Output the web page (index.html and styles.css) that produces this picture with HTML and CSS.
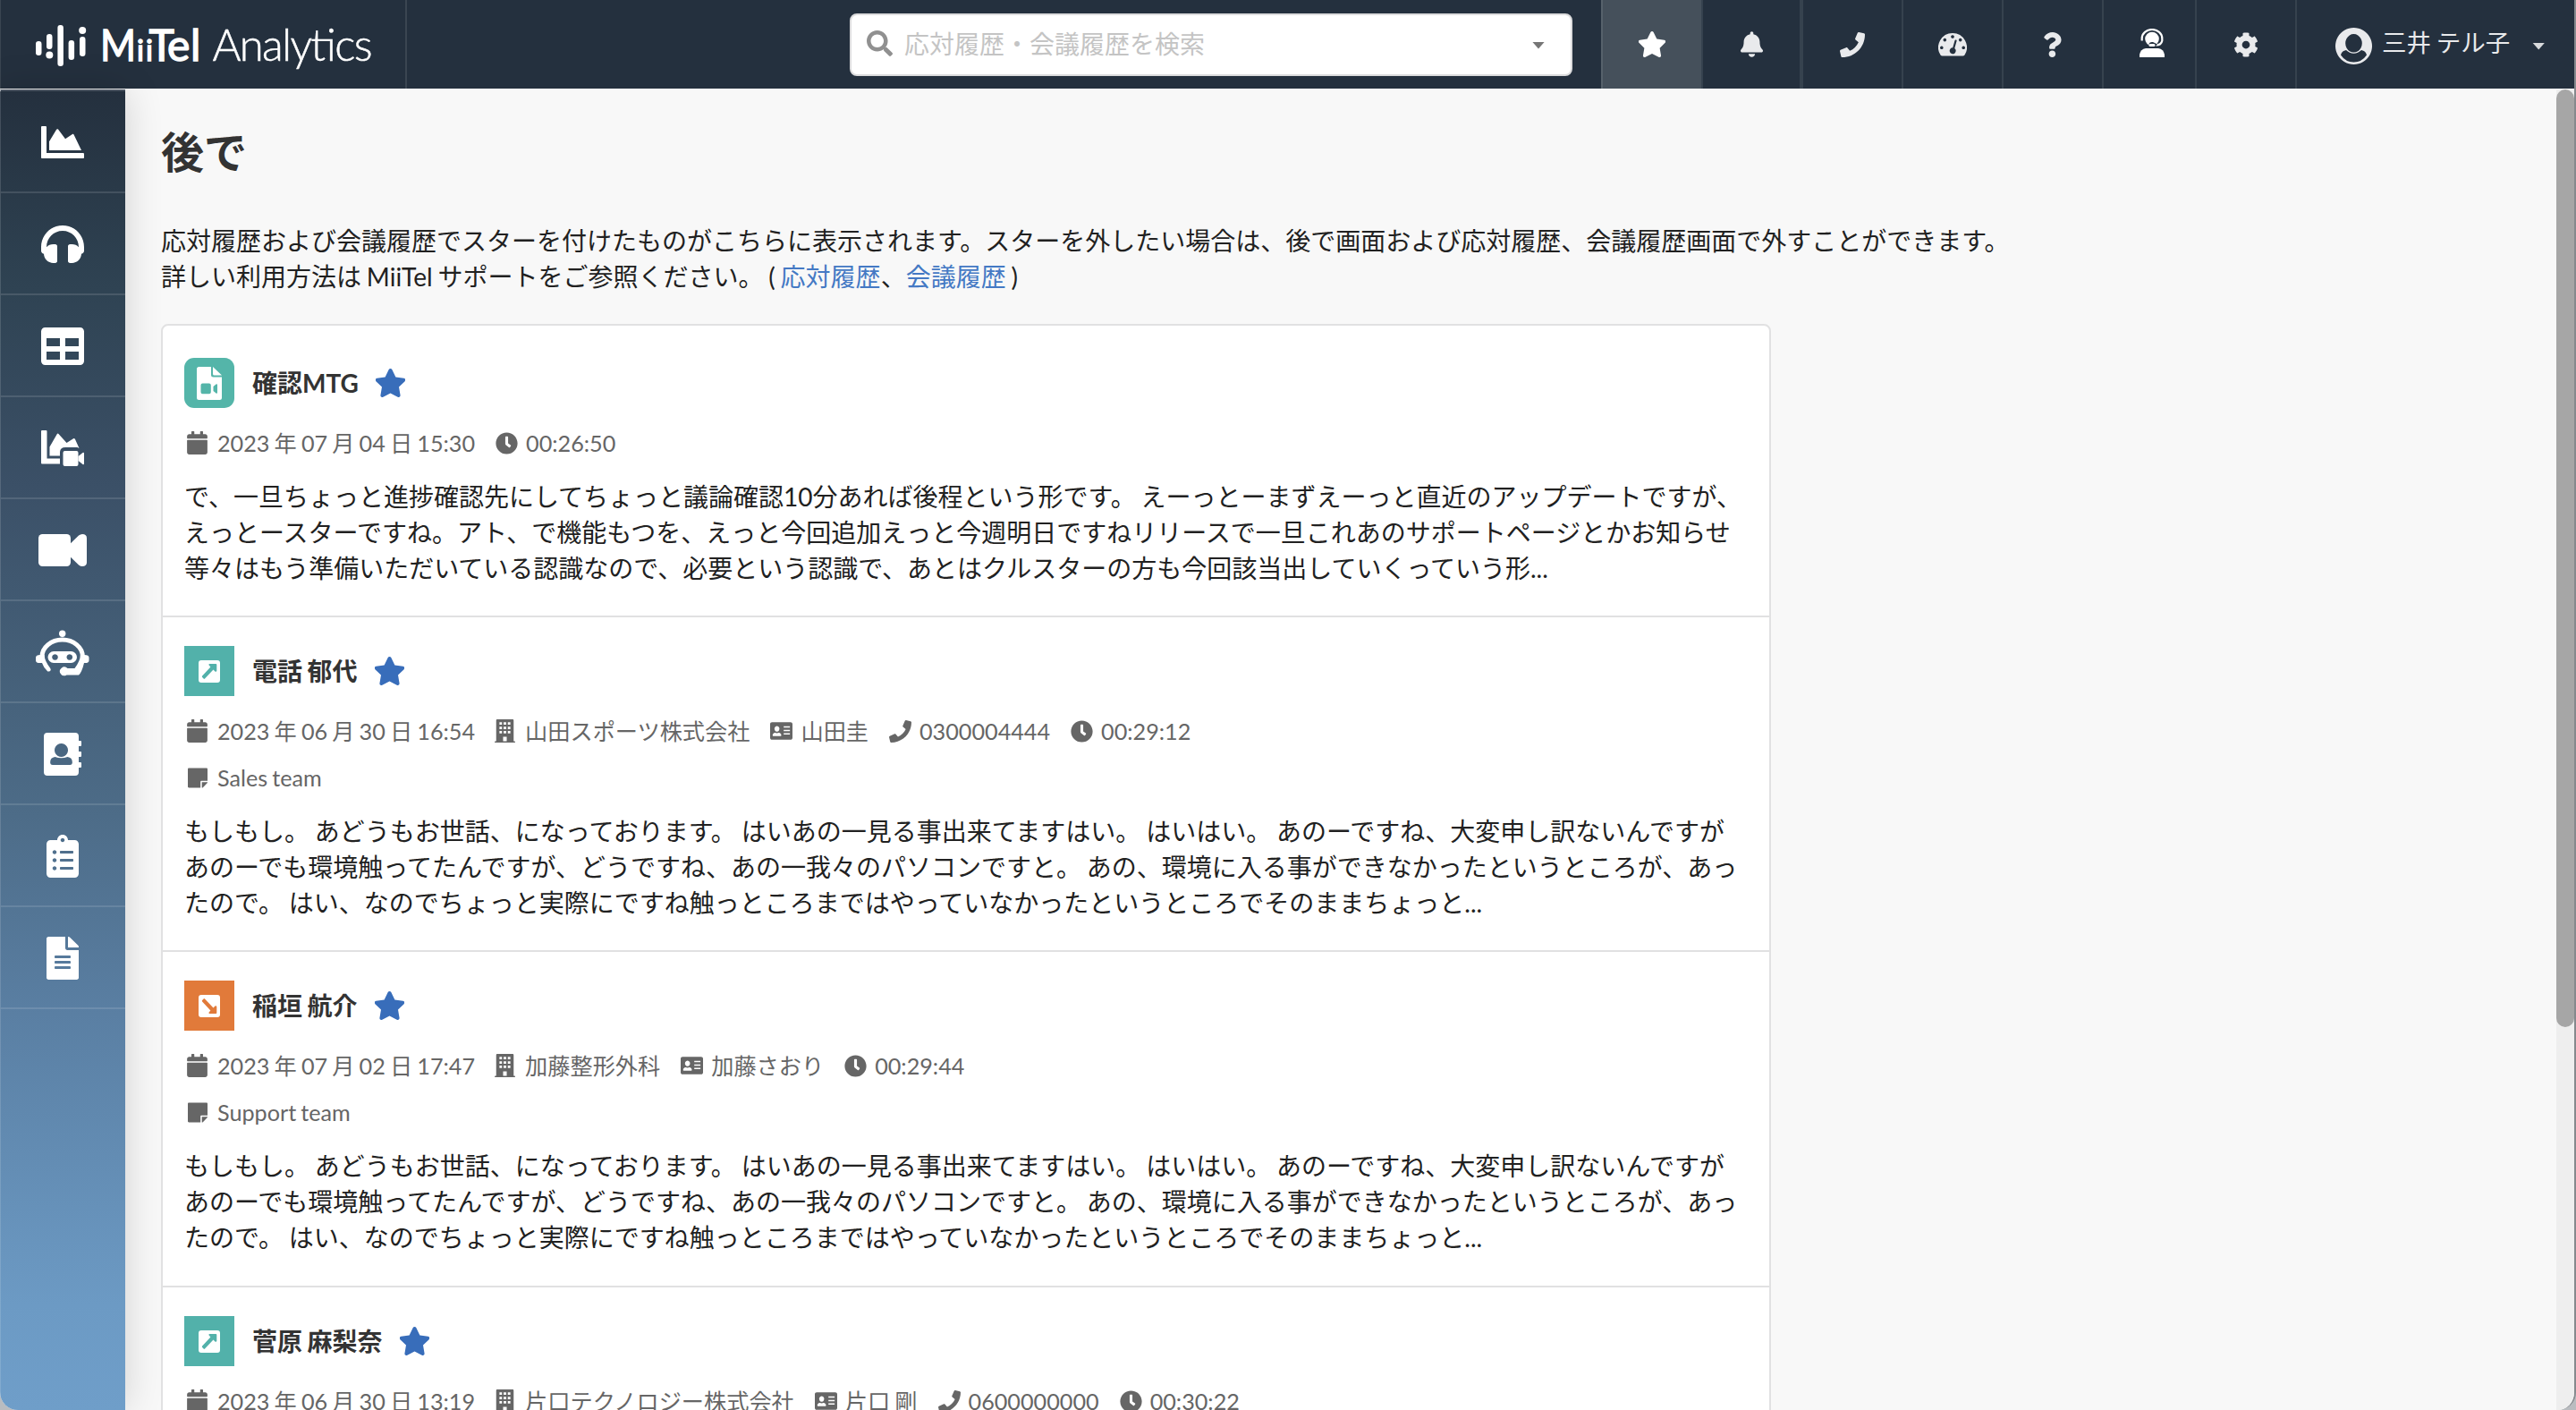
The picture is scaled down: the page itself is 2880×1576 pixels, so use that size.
FILE: index.html
```html
<!DOCTYPE html>
<html lang="ja">
<head>
<meta charset="utf-8">
<title>MiiTel Analytics</title>
<link rel="stylesheet" href="styles.css">
</head>
<body>
<svg class="defs" width="0" height="0">
  <symbol id="i-star" viewBox="24 0 528 512"><path d="M259.3 17.8L194 150.2 47.9 171.5c-26.2 3.8-36.7 36.1-17.7 54.6l105.7 103-25 145.5c-4.5 26.3 23.2 46 46.4 33.7L288 439.6l130.7 68.7c23.2 12.2 50.9-7.4 46.4-33.7l-25-145.5 105.7-103c19-18.5 8.5-50.8-17.7-54.6L382 150.2 316.7 17.8c-11.7-23.6-45.6-23.9-57.4 0z"/></symbol>
  <symbol id="i-phone" viewBox="0 0 512 512"><path d="M493.4 24.6l-104-24c-11.3-2.6-22.9 3.3-27.5 13.9l-48 112c-4.2 9.8-1.4 21.3 6.9 28l60.6 49.6c-36 76.7-98.9 140.5-177.2 177.2l-49.6-60.6c-6.8-8.3-18.2-11.1-28-6.9l-112 48C3.9 366.5-2 378.1.6 389.4l24 104C27.1 504.2 36.7 512 48 512c256.1 0 464-207.5 464-464 0-11.2-7.7-20.9-18.6-23.4z"/></symbol>
  <symbol id="i-calendar" viewBox="0 0 448 512"><path d="M12 192h424c6.6 0 12 5.4 12 12v260c0 26.5-21.5 48-48 48H48c-26.5 0-48-21.5-48-48V204c0-6.6 5.4-12 12-12zm436-44v-36c0-26.5-21.5-48-48-48h-48V12c0-6.6-5.4-12-12-12h-40c-6.6 0-12 5.4-12 12v52H160V12c0-6.6-5.4-12-12-12h-40c-6.6 0-12 5.4-12 12v52H48C21.5 64 0 85.5 0 112v36c0 6.6 5.4 12 12 12h424c6.6 0 12-5.4 12-12z"/></symbol>
  <symbol id="i-clock" viewBox="0 0 512 512"><path d="M256,8C119,8,8,119,8,256S119,504,256,504,504,393,504,256,393,8,256,8Zm92.49,313h0l-20,25a16,16,0,0,1-22.49,2.5h0l-67-49.72a40,40,0,0,1-15-31.23V112a16,16,0,0,1,16-16h32a16,16,0,0,1,16,16V256l58,42.5A16,16,0,0,1,348.49,321Z"/></symbol>
  <symbol id="i-building" viewBox="0 0 448 512"><path fill-rule="evenodd" d="M436 480h-20V24c0-13-11-24-24-24H56C43 0 32 11 32 24v456H12c-7 0-12 5-12 12v20h448v-20c0-7-5-12-12-12zM104 64h56v56h-56zM196 64h56v56h-56zM288 64h56v56h-56zM104 160h56v56h-56zM196 160h56v56h-56zM288 160h56v56h-56zM104 256h56v56h-56zM196 256h56v56h-56zM288 256h56v56h-56zM184 384h80v96h-80z"/></symbol>
  <symbol id="i-card" viewBox="0 0 576 448"><path fill-rule="evenodd" d="M48 0h480c26 0 48 22 48 48v352c0 26-22 48-48 48H48c-26 0-48-22-48-48V48C0 22 22 0 48 0zM176 96a64 74 0 1 0 .1 0zM64 340c0 8 6 14 14 14h196c8 0 14-6 14-14 0-44-24-68-64-72q-48 22-96 0c-40 4-64 28-64 72zM350 104h160v34H350zM350 194h160v34H350zM350 284h160v34H350z"/></symbol>
  <symbol id="i-note" viewBox="0 32 448 448"><path d="M312 320h136V56c0-13.300-10.700-24-24-24H24C10.700 32 0 42.700 0 56v400c0 13.300 10.700 24 24 24h264V344c0-13.200 10.800-24 24-24zm129 55l-98 98c-4.500 4.500-10.600 7-17 7h-6V352h128v6.100c0 6.300-2.500 12.400-7 16.900z"/></symbol>
  <symbol id="i-out" viewBox="0 0 24 25"><path fill-rule="evenodd" d="M3 0h18q3 0 3 3v19q0 3-3 3H3q-3 0-3-3V3q0-3 3-3zM12.300 4q-1.500.3-.7 1.600l1.800 1.900-9.300 10q-.6.8 0 1.500l1.500 1.600q.7.600 1.400 0l9.500-10 1.900 1.900q1.600 1 1.900-.7V5q0-1-1-1z"/></symbol>
  <symbol id="i-in" viewBox="0 0 24 25"><path transform="matrix(1 0 0 -1 0 25)" fill-rule="evenodd" d="M3 0h18q3 0 3 3v19q0 3-3 3H3q-3 0-3-3V3q0-3 3-3zM12.300 4q-1.500.3-.7 1.600l1.800 1.900-9.300 10q-.6.8 0 1.500l1.500 1.600q.7.600 1.400 0l9.500-10 1.900 1.900q1.600 1 1.900-.7V5q0-1-1-1z"/></symbol>
</svg>
<div class="app">
  <header class="topbar">
    <div class="brand">
      <svg class="logo" width="400" height="99" viewBox="0 -24 400 99">
        <rect x="0" y="22" width="6.500" height="16" rx="3.200"/><rect x="12" y="14" width="6.500" height="17" rx="3.200"/><circle cx="15.300" cy="37.500" r="4"/>
        <rect x="24.400" y="4" width="6.500" height="46" rx="3"/><rect x="36.600" y="21" width="6.500" height="22" rx="3.200"/><rect x="49" y="17" width="6.500" height="22" rx="3.200"/><circle cx="52.200" cy="10" r="4"/>
        <text class="logo-main" y="44"><tspan x="72" textLength="40" lengthAdjust="spacingAndGlyphs">M</tspan><tspan class="logo-small" x="113">i</tspan><tspan class="logo-small" x="123">i</tspan><tspan x="126.500">T</tspan><tspan x="147">e</tspan><tspan x="173">l</tspan></text>
        <text class="logo-sub" x="197.500" y="44" textLength="179">Analytics</text>
      </svg>
    </div>
    <div class="search-area">
      <div class="search">
        <svg class="search-icon" viewBox="0 0 512 512"><path d="M505 442.700L405.300 343c-4.500-4.500-10.600-7-17-7H372c27.600-35.300 44-79.700 44-128C416 93.100 322.900 0 208 0S0 93.100 0 208s93.100 208 208 208c48.300 0 92.700-16.400 128-44v16.300c0 6.400 2.500 12.500 7 17l99.700 99.700c9.400 9.400 24.600 9.400 33.900 0l28.300-28.300c9.400-9.400 9.400-24.600.1-34zM208 336c-70.700 0-128-57.200-128-128 0-70.700 57.200-128 128-128 70.700 0 128 57.200 128 128 0 70.700-57.200 128-128 128z"/></svg>
        <span class="placeholder">応対履歴・会議履歴を検索</span>
        <span class="caret caret-dark"></span>
      </div>
    </div>
    <nav class="tools">
      <a class="tool active"><svg width="30" height="29"><use href="#i-star"/></svg></a>
      <a class="tool w110"><svg width="25" height="29" viewBox="0 0 448 512"><path d="M224 512c35.320 0 63.970-28.650 63.970-64H160.030c0 35.350 28.650 64 63.970 64zm215.390-149.710c-19.320-20.760-55.470-51.990-55.470-154.290 0-77.700-54.480-139.900-127.940-155.160V32c0-17.670-14.320-32-31.980-32s-31.980 14.330-31.980 32v20.840C118.560 68.100 64.080 130.300 64.080 208c0 102.300-36.150 133.530-55.470 154.290-6 6.450-8.660 14.160-8.610 21.710.11 16.400 12.980 32 32.100 32h383.800c19.120 0 32-15.600 32.100-32 .05-7.550-2.610-15.270-8.610-21.710z"/></svg></a>
      <a class="tool w114"><svg width="28" height="28"><use href="#i-phone"/></svg></a>
      <a class="tool"><svg width="32" height="26" viewBox="0 0 32 26"><path fill-rule="evenodd" d="M16 0a16 16 0 0 1 13.500 24.500q-.8 1-2 1h-23q-1.200 0-2-1A16 16 0 0 1 16 0zM16 2.200a1.800 1.800 0 1 0 .01 0zM7.300 5.800a1.800 1.800 0 1 0 .01 0zM24.700 5.800a1.800 1.800 0 1 0 .01 0zM3.800 14.500a1.800 1.800 0 1 0 .01 0zM28.200 14.500a1.800 1.800 0 1 0 .01 0zM18.500 8.200l-2.300 8.100a3.500 3.500 0 1 0 2.100.7l2.300-8.200a1.100 1.100 0 0 0-2.100-.6z"/></svg></a>
      <a class="tool"><svg width="20" height="28" viewBox="20 0 366 512"><path d="M202.021 0C122.202 0 70.503 32.703 29.914 91.026c-7.363 10.580-5.093 25.086 5.178 32.874l43.138 32.709c10.373 7.865 25.132 6.026 33.253-4.148 25.049-31.381 43.630-49.449 82.757-49.449 30.764 0 68.816 19.799 68.816 49.631 0 22.552-18.617 34.134-48.993 51.164-35.423 19.860-82.299 44.576-82.299 106.405V320c0 13.255 10.745 24 24 24h72.471c13.255 0 24-10.745 24-24v-5.773c0-42.860 125.268-44.645 125.268-160.627C377.504 66.256 286.902 0 202.021 0zM192 373.459c-38.196 0-69.271 31.075-69.271 69.271 0 38.195 31.075 69.270 69.271 69.270s69.271-31.075 69.271-69.271-31.075-69.270-69.271-69.270z"/></svg></a>
      <a class="tool w104 agent"><svg width="28" height="32" viewBox="0 0 28 32"><path d="M0 32v-3q1-6 7-7h14q6 1 7 7v3z"/><circle cx="14" cy="11.500" r="7.800"/><path class="line" d="M2.700 13.500V11a11.300 10 0 0 1 22.600 0v2.500q-1 5-7 5"/><path class="cut" d="M10.500 17q1-2.500 4.500-2l5 2.500-3 3-6-1z"/><rect x="10.500" y="17" width="7" height="3" rx="1.500"/></svg></a>
      <a class="tool"><svg width="28" height="28" viewBox="0 0 512 512"><path d="M487.400 315.700l-42.600-24.600c4.300-23.200 4.300-47 0-70.200l42.600-24.600c4.900-2.800 7.100-8.600 5.500-14-11.100-35.600-30-67.800-54.700-94.600-3.800-4.100-10-5.100-14.800-2.300L380.800 110c-17.900-15.400-38.500-27.300-60.800-35.100V25.800c0-5.600-3.900-10.500-9.400-11.700-36.700-8.200-74.300-7.800-109.200 0-5.500 1.200-9.400 6.100-9.400 11.700V75c-22.200 7.900-42.800 19.800-60.800 35.100L88.700 85.500c-4.900-2.800-11-1.900-14.800 2.300-24.700 26.700-43.600 58.900-54.700 94.600-1.700 5.400.6 11.200 5.500 14L67.300 221c-4.300 23.200-4.300 47 0 70.200l-42.600 24.600c-4.900 2.800-7.100 8.600-5.500 14 11.100 35.600 30 67.800 54.700 94.600 3.800 4.100 10 5.100 14.800 2.300l42.600-24.600c17.900 15.400 38.500 27.300 60.800 35.100v49.200c0 5.600 3.900 10.500 9.400 11.700 36.700 8.200 74.300 7.800 109.200 0 5.500-1.200 9.400-6.100 9.400-11.700v-49.200c22.200-7.900 42.800-19.800 60.800-35.100l42.600 24.600c4.900 2.800 11 1.900 14.800-2.300 24.700-26.700 43.600-58.900 54.700-94.600 1.500-5.500-.7-11.300-5.600-14.100zM256 336c-44.100 0-80-35.900-80-80s35.900-80 80-80 80 35.900 80 80-35.900 80-80 80z"/></svg></a>
      <a class="user">
        <svg width="41" height="41" viewBox="0 0 41 41"><path fill-rule="evenodd" d="M20.500 0a20.500 20.500 0 1 0 .01 0zM20.500 7a9.300 10.300 0 1 1-.01 0zM12 25q3.700 3.700 8.500 3.700T29 25q5 .8 6 5.500-5.500 8-14.500 8T6 30.500q1-4.700 6-5.500z"/></svg>
        <span class="user-name">三井 テル子</span><span class="caret caret-light"></span>
      </a>
    </nav>
  </header>
  <div class="body">
    <aside class="sidebar">
      <a class="side"><svg width="48" height="48" viewBox="0 0 512 512"><path d="M500 384c6.600 0 12 5.400 12 12v40c0 6.600-5.400 12-12 12H12c-6.600 0-12-5.400-12-12V76c0-6.600 5.400-12 12-12h40c6.600 0 12 5.400 12 12v308h436zM372.700 159.500L288 216l-85.300-113.700c-5.100-6.800-15.500-6.300-19.900 1L96 248v104h384l-89.900-187.800c-3.200-6.500-11.400-8.700-17.400-4.700z"/></svg></a>
      <a class="side"><svg width="48" height="48" viewBox="0 0 512 512"><path d="M256 32C114.520 32 0 146.497 0 288v48a32 32 0 0 0 17.689 28.622l14.383 7.191C34.083 431.903 83.421 480 144 480h24c13.255 0 24-10.745 24-24V280c0-13.255-10.745-24-24-24h-24c-31.342 0-59.671 12.879-80 33.627V288c0-105.869 86.131-192 192-192s192 86.131 192 192v1.627C427.671 268.879 399.342 256 368 256h-24c-13.255 0-24 10.745-24 24v176c0 13.255 10.745 24 24 24h24c60.579 0 109.917-48.097 111.928-108.187l14.382-7.191A32 32 0 0 0 512 336v-48c0-141.479-114.496-256-256-256z"/></svg></a>
      <a class="side"><svg width="48" height="48" viewBox="0 0 512 512"><path d="M464 32H48C21.490 32 0 53.490 0 80v352c0 26.510 21.490 48 48 48h416c26.510 0 48-21.490 48-48V80c0-26.510-21.490-48-48-48zM224 416H64v-96h160v96zm0-160H64v-96h160v96zm224 160H288v-96h160v96zm0-160H288v-96h160v96z"/></svg></a>
      <a class="side"><svg width="48" height="40" viewBox="0 0 48 40"><path d="M1 0h4.500q1 0 1 1v30.500H21V37.500H1q-1 0-1-1V1q0-1 1-1zM9.500 28.500v-10L17.700 4.200q1-1.500 2 0L28.500 14l7.500-4.800q1.300-.6 2 .8l4.500 10-2-1H27q-5.500 0-6 5v4.500z"/><rect x="24.500" y="23" width="17" height="17" rx="2"/><path d="M41.500 29l5-4q1.500-1 1.500 1v11q0 2-1.500 1l-5-4z"/></svg></a>
      <a class="side"><svg width="54" height="36" viewBox="0 0 54 36"><rect width="36" height="36" rx="4.500"/><path d="M36 10.300L45 1.600Q47 0 49 0q5 .2 5 4.500v27q0 4.300-5 4.500-2 0-4-1.600l-9-8.700z"/></svg></a>
      <a class="side robot"><svg width="60" height="54" viewBox="0 0 60 54"><circle cx="29.700" cy="4.200" r="3.700"/><path class="arc" d="M7 31V30a22.700 19 0 0 1 45.400 0v1"/><path d="M5 28h4.500q.5 7 6.800 15l.5 2q-1 2-3.500 1.500Q9 43 7 37H3q-3-.3-3-3v-3q0-3 5-3z"/><path d="M54.500 28H50q-.5 7-6.500 15H35.500a5 4.800 0 1 0-1 7.500H48q3.500-3 6-13.500h2.500q3-.3 3-3v-3q0-3-5-3z"/><path fill-rule="evenodd" d="M20 24h19.500a6.300 6.300 0 0 1 0 13H20a6.300 6.300 0 0 1 0-13zM21.500 27.200a3.300 3.300 0 1 0 .01 0zM37.800 27.200a3.300 3.300 0 1 0 .01 0z"/></svg></a>
      <a class="side"><svg width="42" height="48" viewBox="0 0 42 48"><path fill-rule="evenodd" d="M4 0h31q4 0 4 4v5h2q1 0 1 1v4q0 1-1 1h-2v6h2q1 0 1 1v4q0 1-1 1h-2v6h2q1 0 1 1v4q0 1-1 1h-2v5q0 4-4 4H4q-4 0-4-4V4q0-4 4-4zM19.500 12a7.500 7.500 0 1 0 .01 0zM12.500 27q-5.300.8-5.300 5.500V34q.3 2 2.500 2h19.600q2.200 0 2.500-2v-1.500q0-4.700-5.300-5.500-7 2.500-14 0z"/></svg></a>
      <a class="side"><svg width="36" height="48" viewBox="0 0 384 512"><path d="M336 64h-80c0-35.300-28.700-64-64-64s-64 28.700-64 64H48C21.500 64 0 85.500 0 112v352c0 26.500 21.500 48 48 48h288c26.500 0 48-21.500 48-48V112c0-26.500-21.500-48-48-48zM96 424c-13.300 0-24-10.700-24-24s10.700-24 24-24 24 10.700 24 24-10.700 24-24 24zm0-96c-13.300 0-24-10.700-24-24s10.700-24 24-24 24 10.700 24 24-10.700 24-24 24zm0-96c-13.300 0-24-10.700-24-24s10.700-24 24-24 24 10.700 24 24-10.700 24-24 24zm96-192c13.300 0 24 10.700 24 24s-10.700 24-24 24-24-10.700-24-24 10.700-24 24-24zm128 368c0 4.400-3.600 8-8 8H168c-4.400 0-8-3.600-8-8v-16c0-4.400 3.600-8 8-8h144c4.400 0 8 3.600 8 8v16zm0-96c0 4.400-3.600 8-8 8H168c-4.400 0-8-3.600-8-8v-16c0-4.400 3.600-8 8-8h144c4.400 0 8 3.600 8 8v16zm0-96c0 4.400-3.600 8-8 8H168c-4.400 0-8-3.600-8-8v-16c0-4.400 3.600-8 8-8h144c4.400 0 8 3.600 8 8v16z"/></svg></a>
      <a class="side"><svg width="36" height="48" viewBox="0 0 384 512"><path d="M224 136V0H24C10.700 0 0 10.700 0 24v464c0 13.300 10.700 24 24 24h336c13.300 0 24-10.700 24-24V160H248c-13.200 0-24-10.800-24-24zm64 236c0 6.600-5.400 12-12 12H108c-6.600 0-12-5.400-12-12v-8c0-6.600 5.400-12 12-12h168c6.600 0 12 5.400 12 12v8zm0-64c0 6.600-5.400 12-12 12H108c-6.600 0-12-5.400-12-12v-8c0-6.600 5.400-12 12-12h168c6.600 0 12 5.400 12 12v8zm0-72v8c0 6.600-5.400 12-12 12H108c-6.600 0-12-5.400-12-12v-8c0-6.600 5.400-12 12-12h168c6.600 0 12 5.400 12 12zm96-114.100v6.100H256V0h6.100c6.400 0 12.500 2.500 17 7l97.900 98c4.500 4.500 7 10.600 7 16.900z"/></svg></a>
    </aside>
    <main class="content">
      <h1>後で</h1>
      <p class="lead">応対履歴および会議履歴でスターを付けたものがこちらに表示されます。スターを外したい場合は、後で画面および応対履歴、会議履歴画面で外すことができます。<br>詳しい利用方法は MiiTel サポートをご参照ください。 ( <a>応対履歴</a>、<a>会議履歴</a> )</p>
      <section class="list">
        <article class="item item-meeting">
          <div class="head">
            <span class="badge badge-file"><svg width="28" height="37" viewBox="0 0 28 37"><path fill-rule="evenodd" d="M2.500 0H16v9q0 2.500 2.500 2.500H28v23q0 2.500-2.500 2.500h-23Q0 37 0 34.500v-32Q0 0 2.500 0zM6.500 18.500q-2 0-2 2v7.800q0 2 2 2h7.300q2 0 2-2v-7.800q0-2-2-2zM18.500 22v5l3 2.500q1.500 1 1.500-1v-8q0-2-1.500-1z"/><path d="M18 0l10 9.500H19.500Q18 9.500 18 8z"/></svg></span>
            <h2>確認MTG</h2><svg class="star"><use href="#i-star"/></svg>
          </div>
          <div class="meta">
            <span><svg class="mi cal"><use href="#i-calendar"/></svg>2023 年 07 月 04 日 15:30</span>
            <span><svg class="mi"><use href="#i-clock"/></svg>00:26:50</span>
          </div>
          <p class="desc">で、一旦ちょっと進捗確認先にしてちょっと議論確認10分あれば後程という形です。 えーっとーまずえーっと直近のアップデートですが、<br>えっとースターですね。アト、で機能もつを、えっと今回追加えっと今週明日ですねリリースで一旦これあのサポートページとかお知らせ<br>等々はもう準備いただいている認識なので、必要という認識で、あとはクルスターの方も今回該当出していくっていう形...</p>
        </article>
        <article class="item">
          <div class="head">
            <span class="badge"><svg width="24" height="25"><use href="#i-out"/></svg></span>
            <h2>電話 郁代</h2><svg class="star"><use href="#i-star"/></svg>
          </div>
          <div class="meta">
            <span><svg class="mi cal"><use href="#i-calendar"/></svg>2023 年 06 月 30 日 16:54</span>
            <span><svg class="mi cal"><use href="#i-building"/></svg>山田スポーツ株式会社</span>
            <span><svg class="mi card"><use href="#i-card"/></svg>山田圭</span>
            <span><svg class="mi"><use href="#i-phone"/></svg>0300004444</span>
            <span><svg class="mi"><use href="#i-clock"/></svg>00:29:12</span>
          </div>
          <div class="meta note"><span><svg class="mi sticky"><use href="#i-note"/></svg>Sales team</span></div>
          <p class="desc">もしもし。 あどうもお世話、になっております。 はいあの一見る事出来てますはい。 はいはい。 あのーですね、大変申し訳ないんですが<br>あのーでも環境触ってたんですが、どうですね、あの一我々のパソコンですと。 あの、環境に入る事ができなかったというところが、あっ<br>たので。 はい、なのでちょっと実際にですね触っところまではやっていなかったというところでそのままちょっと...</p>
        </article>
        <article class="item item-tall">
          <div class="head">
            <span class="badge badge-in"><svg width="24" height="25"><use href="#i-in"/></svg></span>
            <h2>稲垣 航介</h2><svg class="star"><use href="#i-star"/></svg>
          </div>
          <div class="meta">
            <span><svg class="mi cal"><use href="#i-calendar"/></svg>2023 年 07 月 02 日 17:47</span>
            <span><svg class="mi cal"><use href="#i-building"/></svg>加藤整形外科</span>
            <span><svg class="mi card"><use href="#i-card"/></svg>加藤さおり</span>
            <span><svg class="mi"><use href="#i-clock"/></svg>00:29:44</span>
          </div>
          <div class="meta note"><span><svg class="mi sticky"><use href="#i-note"/></svg>Support team</span></div>
          <p class="desc">もしもし。 あどうもお世話、になっております。 はいあの一見る事出来てますはい。 はいはい。 あのーですね、大変申し訳ないんですが<br>あのーでも環境触ってたんですが、どうですね、あの一我々のパソコンですと。 あの、環境に入る事ができなかったというところが、あっ<br>たので。 はい、なのでちょっと実際にですね触っところまではやっていなかったというところでそのままちょっと...</p>
        </article>
        <article class="item">
          <div class="head">
            <span class="badge"><svg width="24" height="25"><use href="#i-out"/></svg></span>
            <h2>菅原 麻梨奈</h2><svg class="star"><use href="#i-star"/></svg>
          </div>
          <div class="meta">
            <span><svg class="mi cal"><use href="#i-calendar"/></svg>2023 年 06 月 30 日 13:19</span>
            <span><svg class="mi cal"><use href="#i-building"/></svg>片口テクノロジー株式会社</span>
            <span><svg class="mi card"><use href="#i-card"/></svg>片口 剛</span>
            <span><svg class="mi"><use href="#i-phone"/></svg>0600000000</span>
            <span><svg class="mi"><use href="#i-clock"/></svg>00:30:22</span>
          </div>
        </article>
      </section>
    </main>
    <div class="scroll"><div class="thumb"></div></div>
  </div>
</div>
</body>
</html>
```
FILE: styles.css
```css
* { box-sizing: border-box; }
html { background: #b9bcc0; }
body {
  margin: 0;
  font-family: Lato, "Noto Sans CJK JP", sans-serif;
  font-size: 28px;
  line-height: 40px;
  word-spacing: -1.3px;
  color: #212121;
}
.defs { display: block; }
.app {
  display: flex;
  flex-direction: column;
  width: 2880px;
  height: 1576px;
  overflow: hidden;
  border-radius: 0 0 20px 20px;
  border-right: 2px solid #85898d;
  background: #f8f8f8;
}

/* Top bar */
.topbar {
  display: flex;
  flex: none;
  height: 99px;
  background: #24303e;
  border-left: 1px solid #3a4551;
}
.brand {
  display: flex;
  width: 454px;
  padding-left: 39px;
  border-right: 2px solid #3a4551;
}
.logo { fill: #fff; }
.logo-main { font-size: 48px; font-weight: 400; stroke: #fff; stroke-width: 1.4px; }
.logo-small { font-size: 33px; }
.logo-sub { font-size: 49px; font-weight: 300; stroke: #fff; stroke-width: .5px; }
.search-area { display: flex; flex: 1; align-items: center; padding-left: 495px; }
.search {
  display: flex;
  align-items: center;
  width: 808px;
  height: 70px;
  padding: 0 29px 0 17px;
  border: 2px solid #dcdcdd;
  border-radius: 8px;
  background: #fff;
}
.search-icon { width: 29px; height: 29px; margin: 0 13px 2px 0; fill: #909090; }
.placeholder { flex: 1; margin-bottom: 1px; color: #c4c4c4; white-space: nowrap; }
.caret { width: 14px; height: 8px; clip-path: polygon(0 0, 100% 0, 50% 100%); }
.caret-dark { background: #767676; margin-top: 2px; }
.caret-light { background: #d8dadc; margin: 4px 0 0 25px; }
.tools { display: flex; flex: none; fill: #e9eaec; }
.tool {
  display: flex;
  align-items: center;
  justify-content: center;
  width: 112px;
  border-left: 2px solid #36424e;
}
.active { fill: #fff; background: #45505b; border-color: #56616b; }
.w110 { width: 110px; }
.w114 { width: 114px; border-left-width: 4px; }
.w104 { width: 104px; }
.agent { fill: #fff; }
.agent svg { margin: 0 0 4px 5px; }
.line { fill: none; stroke: #fff; stroke-width: 2.2px; }
.cut { fill: #24303e; }
.user {
  display: flex;
  align-items: center;
  width: 312px;
  padding-left: 43px;
  border-left: 2px solid #36424e;
}
.user svg { margin-top: 4px; }
.user-name {
  margin: 0 0 4px 11px;
  font-size: 27.5px;
  color: #e9eaec;
  white-space: nowrap;
}

/* Body */
.body { display: flex; flex: 1; min-height: 0; padding-top: 1px; }
.sidebar {
  flex: none;
  width: 140px;
  border-top: 2px solid #48525f;
  border-left: 1px solid rgba(255, 255, 255, .14);
  background: linear-gradient(#24303e 0, #2f4353 15%, #3b5067 30%, #456079 44%, #4d6c88 55%, #5a7fa3 70%, #6c9ac4 92%, #6f9ec9 100%);
  box-shadow: 0 0 40px rgba(0, 0, 0, .16);
  fill: #fff;
}
.side {
  display: flex;
  align-items: center;
  justify-content: center;
  height: 114px;
  padding-right: 1px;
  border-bottom: 2px solid rgba(255, 255, 255, .12);
}
.side svg { margin-top: 2px; }
.robot svg { margin-top: 5px; }
.arc { fill: none; stroke: #fff; stroke-width: 5px; }
.content { flex: 1; min-width: 0; padding: 34px 0 0 40px; }
h1 { margin: 0; font-size: 48px; line-height: 72px; font-weight: 700; color: #333; }
.lead { margin: 43px 0 33px; white-space: nowrap; }
.lead a { color: #4479c4; }
.list {
  width: 1800px;
  border: 2px solid #e1e1e2;
  border-radius: 8px;
  background: #fff;
}
.item { height: 374px; padding: 32px 24px 0; border-top: 2px solid #e1e1e2; }
.item-meeting { height: 324px; padding-top: 36px; border-top: 0; }
.item-tall { height: 375px; }
.item-tall .desc { margin-top: 20px; }
.head { display: flex; align-items: center; height: 56px; }
.badge {
  display: flex;
  align-items: center;
  justify-content: center;
  width: 56px;
  height: 56px;
  background: #52b1aa;
  fill: #fff;
}
.badge-file { border-radius: 11px; background: #54b5a9; }
.badge-in { background: #e17a3a; }
h2 { margin: 0 0 0 20px; font-size: 28px; line-height: 40px; font-weight: 700; color: #333; }
.star { width: 33px; height: 32px; margin-left: 19px; fill: #386dba; }
.meta {
  display: flex;
  gap: 19px;
  height: 40px;
  margin-top: 19px;
  font-size: 25.2px;
  color: #666;
  fill: #666;
}
.meta span { display: flex; align-items: center; white-space: nowrap; }
.mi { width: 25px; height: 25px; margin: 0 9px 0 4px; }
.cal { width: 23px; height: 26px; margin: 0 11px 0 3px; }
.meta .cal + svg { margin-left: 0; }
.card { height: 20px; }
.sticky { width: 22px; height: 23px; margin: 0 11px 0 4px; }
.note { margin-top: 12px; }
.desc { margin: 20px 0 0; white-space: nowrap; }

/* Scrollbar */
.scroll { flex: none; width: 20px; background: #eee; }
.thumb { height: 1048px; border-radius: 10px; background: #a6a6a6; }
```
